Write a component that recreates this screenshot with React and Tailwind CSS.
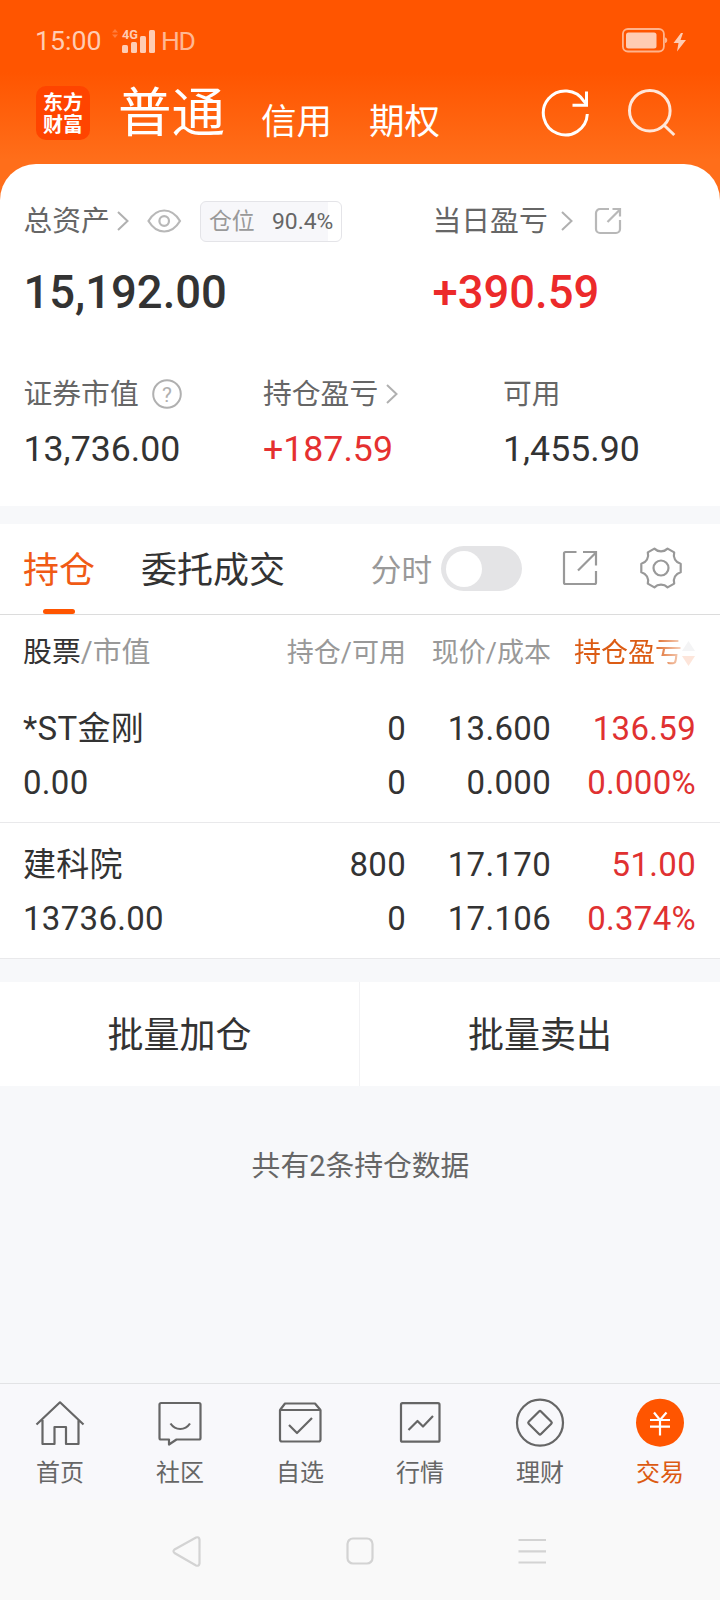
import React, { useState } from "react";

const positions = [
  {
    name: "*ST金刚",
    value: "0.00",
    amount: "0",
    available: "0",
    price: "13.600",
    cost: "0.000",
    profit: "136.59",
    rate: "0.000%",
  },
  {
    name: "建科院",
    value: "13736.00",
    amount: "800",
    available: "0",
    price: "17.170",
    cost: "17.106",
    profit: "51.00",
    rate: "0.374%",
  },
];

function Chevron({ className }) {
  return (
    <svg className={className} width="12" height="20" viewBox="0 0 12 20" fill="none" stroke="#b0b0b0" strokeWidth="2">
      <path d="M1 1l9.500 9L1 19" />
    </svg>
  );
}

function StatusBar() {
  return (
    <div className="flex h-[82px] items-center pl-[35px] pr-[33px] text-[#ffccb3]">
      <span className="w-[76px] text-[26.7px] leading-none">15:00</span>
      <svg width="46" height="26" viewBox="0 0 46 26" fill="currentColor">
        <path d="M1 4.500l3-3.500 3 3.500zM1 6.500l3 3.500 3-3.500z" opacity=".35" />
        <text x="11" y="11" fontSize="13" fontWeight="700" textLength="16" lengthAdjust="spacingAndGlyphs">4G</text>
        <rect x="11" y="17" width="6" height="8" rx="1.500" />
        <rect x="20" y="14" width="6" height="11" rx="1.500" />
        <rect x="29" y="8" width="6" height="17" rx="1.500" />
        <rect x="38" y="2" width="6" height="23" rx="1.500" />
      </svg>
      <span className="ml-[4px] text-[26.5px] leading-none tracking-[-1.5px] text-[#ffb793]">HD</span>
      <svg className="ml-auto" width="66" height="26" viewBox="0 0 66 26">
        <rect x="1.900" y="1" width="41" height="22.500" rx="5" fill="none" stroke="#ffb38c" strokeWidth="1.800" />
        <rect x="5" y="4.500" width="30.500" height="16" rx="2.500" fill="currentColor" />
        <path d="M44 9.500c3 .5 3 5 0 5.500z" fill="#ffb38c" />
        <path d="M60 5l-7.500 10h5l-1.500 8.500 9-11.500h-5.500l2.500-7z" fill="currentColor" />
      </svg>
    </div>
  );
}

function TopNav() {
  return (
    <div className="flex h-[62px] items-center pl-9 pr-11 text-white">
      <div className="flex h-[54px] w-[54px] flex-col items-center justify-center rounded-[10px] bg-[#ff4400] pt-px text-[20px] font-bold leading-[22px]">
        <span>东方</span>
        <span>财富</span>
      </div>
      <span className="ml-7 mt-px w-[106px] whitespace-nowrap text-[53.5px] leading-none">普通</span>
      <span className="ml-[37px] mt-[19px] w-[72px] text-[35.5px] leading-none">信用</span>
      <span className="ml-9 mt-[19px] text-[35.5px] leading-none">期权</span>
      <svg className="ml-auto" width="50" height="50" viewBox="0 0 50 50" fill="none" stroke="#fff" strokeWidth="3">
        <path d="M47.300 26a22 22 0 1 1-3.200-12.500L47 17" />
        <path d="M46.500 3.500v13.800h-14" />
      </svg>
      <svg className="ml-[36px]" width="50" height="50" viewBox="0 0 50 50" fill="none" stroke="#ffe6d9" strokeWidth="3">
        <circle cx="23.800" cy="22.700" r="20.300" />
        <path d="M37.800 37l10.500 10" />
      </svg>
    </div>
  );
}

function Assets() {
  return (
    <section className="h-[342px] rounded-t-[36px] bg-white pl-[23.5px] pr-6 pt-[34px] text-[#333]">
      <div className="flex h-[46px]">
        <div className="flex w-[409px] items-center text-[28.8px] text-[#666]">
          <span className="pt-[2px]">总资产</span>
          <Chevron className="ml-[7px]" />
          <svg className="ml-[18px]" width="35" height="26" viewBox="0 0 35 26" fill="none" stroke="#b8b8b8" strokeWidth="2.200">
            <path d="M1.500 13C6 5.500 11.500 2.500 17.200 2.500S28.500 5.500 33 13C28.500 20.500 23 23.500 17.200 23.500S6 20.500 1.500 13z" />
            <circle cx="17.200" cy="13" r="4.800" />
          </svg>
          <div className="ml-[18px] flex h-[41px] w-[142px] items-center rounded-md border border-[#e4e4e8] bg-[linear-gradient(to_right,#f7f7fa_127px,#fff_127px)] pl-[8px] pt-[2px] text-[22.9px]">
            <span className="w-[63px] text-[#999]">仓位</span>
            <span>90.4%</span>
          </div>
        </div>
        <div className="flex items-center text-[28.8px] text-[#666]">
          <span className="pt-[2px]">当日盈亏</span>
          <Chevron className="ml-[13px]" />
          <svg className="ml-[21px]" width="28" height="28" viewBox="0 0 28 28" fill="none" stroke="#b8b8b8" strokeWidth="2.200">
            <path d="M15 2H6a4 4 0 0 0-4 4v16a4 4 0 0 0 4 4h16a4 4 0 0 0 4-4v-9" />
            <path d="M13.500 15L26 2.500M18.500 2H26v7.500" />
          </svg>
        </div>
      </div>
      <div className="mt-[19px] flex h-[60px] items-center text-[45.4px] font-medium">
        <span className="w-[409px]">15,192.00</span>
        <span className="text-[#ec2a2a]">+390.59</span>
      </div>
      <div className="mt-[48px] grid h-[44px] grid-cols-[239.5px_240px_1fr] text-[28.800px] text-[#666]">
        <div className="flex items-center">
          <span className="pt-[2px]">证券市值</span>
          <svg className="ml-[13px]" width="30" height="30" viewBox="0 0 30 30">
            <circle cx="15" cy="15" r="13.800" fill="none" stroke="#b0b0b0" strokeWidth="2" />
            <text x="15" y="22.500" textAnchor="middle" fontSize="21" fill="#b0b0b0">?</text>
          </svg>
        </div>
        <div className="flex items-center">
          <span className="pt-[2px]">持仓盈亏</span>
          <Chevron className="ml-[8px]" />
        </div>
        <div className="flex items-center pt-[2px]">可用</div>
      </div>
      <div className="mt-[8px] grid h-[50px] grid-cols-[239.5px_240px_1fr] items-center text-[35.7px]">
        <span>13,736.00</span>
        <span className="text-[#e53030]">+187.59</span>
        <span>1,455.90</span>
      </div>
    </section>
  );
}

function Tabs({ timeShare, onToggle }) {
  return (
    <div className="mt-[18px] flex h-[91px] items-center border-b border-[#dcdcdc] bg-white pl-6 pr-[38px] text-[36px] text-[#333]">
      <div className="flex h-full w-[70px] flex-col items-center justify-between text-[#f05a14]">
        <span className="h-[85px] w-[72px] leading-[94px]">持仓</span>
        <span className="h-[5px] w-8 rounded-full bg-[#ff5500]" />
      </div>
      <span className="ml-[47px] pt-[3px]">委托成交</span>
      <span className="ml-auto pt-[3px] text-[30.6px] text-[#999]">分时</span>
      <button
        onClick={onToggle}
        className={`ml-[9px] mb-px flex h-[45px] w-[81px] items-center rounded-full bg-[#e4e4e6] px-[5px] ${timeShare ? "justify-end" : ""}`}
      >
        <span className="h-9 w-9 rounded-full bg-white" />
      </button>
      <svg className="ml-[40px] mb-[2px]" width="36" height="36" viewBox="0 0 36 36" fill="none" stroke="#999" strokeWidth="2.200">
        <path d="M14.500 2H3.500A1.500 1.500 0 0 0 2 3.500v29A1.500 1.500 0 0 0 3.500 34h29a1.500 1.500 0 0 0 1.500-1.500V21" />
        <path d="M16 20.500L34 2.500M21 2h13v13.500" />
      </svg>
      <svg className="ml-[42px] mb-[2px]" width="42" height="42" viewBox="0 0 42 42" fill="none" stroke="#999" strokeWidth="2.200" strokeLinejoin="round">
        <path d="M14.400 1.600C18 5.200 24 5.200 27.600 1.600L34.200 5.400C32.800 10.500 35.500 15.400 40.700 16.800V25.200C35.500 26.600 32.800 31.500 34.200 36.600L27.600 40.400C24 36.800 18 36.800 14.400 40.400L7.800 36.600C9.200 31.500 6.500 26.600 1.300 25.200V16.800C6.500 15.400 9.200 10.500 7.800 5.400Z" />
        <circle cx="21" cy="21" r="7.500" />
      </svg>
    </div>
  );
}

function PositionTable() {
  return (
    <div className="bg-white text-[#333]">
      <div className="grid h-[72px] grid-cols-[238px_145px_145px_145px] items-center pl-[23px] pt-[4px] text-right text-[27px] text-[#999]">
        <span className="text-left text-[28.9px]">
          <span className="text-[#333]">股票</span>/市值
        </span>
        <span>持仓/可用</span>
        <span>现价/成本</span>
        <div className="flex items-center pl-[23px] text-[#dc5c14]">
          <span className="[mask-image:linear-gradient(to_right,#000_78px,rgba(0,0,0,0.25)_108px)]">持仓盈亏</span>
          <svg className="mt-px" width="13" height="26" viewBox="0 0 13 26">
            <path d="M0 10L6.500 0 13 10z" fill="#f4f4f5" />
            <path d="M0 15h13L6.500 25z" fill="#fde5da" />
          </svg>
        </div>
      </div>
      {positions.map((item) => (
        <div
          key={item.name}
          className="grid h-[136px] grid-cols-[238px_145px_145px_145px] border-b border-[#e9e9eb] pl-[23px] pt-[15px] text-right text-[33px] leading-[54px] tracking-[0.3px]"
        >
          <div className="text-left">
            <div>{item.name}</div>
            <div>{item.value}</div>
          </div>
          <div>
            <div>{item.amount}</div>
            <div>{item.available}</div>
          </div>
          <div>
            <div>{item.price}</div>
            <div>{item.cost}</div>
          </div>
          <div className="text-[#e03131]">
            <div>{item.profit}</div>
            <div>{item.rate}</div>
          </div>
        </div>
      ))}
    </div>
  );
}

const tabs = [
  {
    label: "首页",
    icon: <path d="M1 24.500L24.500 2.300 48 24.500M7 20v24h12v-17h11.500v17h12.500V20" />,
  },
  {
    label: "社区",
    icon: (
      <>
        <path d="M5.500 3h38a1.500 1.500 0 0 1 1.500 1.500v33.500a1.500 1.500 0 0 1-1.500 1.500H21l-7.500 5V39.500h-8a1.500 1.500 0 0 1-1.500-1.500V4.500A1.500 1.500 0 0 1 5.500 3z" />
        <path d="M15 23.500c5 7.300 14.500 7.300 19.500 0" />
      </>
    ),
  },
  {
    label: "自选",
    icon: (
      <>
        <path d="M4.500 10v29.500a2 2 0 0 0 2 2h36.500a2 2 0 0 0 2-2V10zM4.500 10l5-6.500h30L45 10" />
        <path d="M13.500 25l8 8 15-15" />
      </>
    ),
  },
  {
    label: "行情",
    icon: (
      <>
        <rect x="5.500" y="3.200" width="38.500" height="38.500" rx="1.500" />
        <path d="M13 30l9-9 5.500 5.500L37.500 16" />
      </>
    ),
  },
  {
    label: "理财",
    icon: (
      <>
        <circle cx="24.500" cy="22.700" r="23" />
        <path d="M23.500 11.500q1-1 2 0l10.300 10.200q1 1 0 2L25.500 34q-1 1-2 0L13.200 23.700q-1-1 0-2z" />
      </>
    ),
  },
  {
    label: "交易",
    active: true,
    icon: (
      <>
        <circle cx="24.500" cy="22.700" r="24" fill="#ff5500" stroke="none" />
        <path d="M18.500 12.500l6 7.500 6.500-7.500M14.500 20h20M14.500 26.700h20M24.500 20v15.500" stroke="#fff" />
      </>
    ),
  },
];

function BottomBar() {
  return (
    <nav className="grid h-[117px] grid-cols-6 border-t border-[#e2e3e5] bg-[#f8f8fb] text-[24px] text-[#666]">
      {tabs.map((tab) => (
        <div key={tab.label} className={`flex flex-col items-center pt-[16px] ${tab.active ? "text-[#dc5a12]" : ""}`}>
          <svg
            className="overflow-visible"
            width="48"
            height="46"
            viewBox="0.5 0 48 46"
            fill="none"
            stroke="#666"
            strokeWidth="2.200"
            strokeLinejoin="round"
          >
            {tab.icon}
          </svg>
          <span className="mt-[11px] leading-[32px]">{tab.label}</span>
        </div>
      ))}
    </nav>
  );
}

function SystemNav() {
  return (
    <div className="flex h-[100px] items-start bg-[#f9f9f9] pl-[172px] pt-[36px]">
      <svg width="376" height="32" viewBox="0 0 376 32" fill="none" stroke="#d3d3d3" strokeWidth="2.200">
        <path d="M2.500 13.500L24 1.500q3-1 3.500 2v24q-.5 3-3.500 2L2.500 17q-2-1.700 0-3.500z" />
        <rect x="175.500" y="2.500" width="25" height="25" rx="5.500" />
        <path d="M346.500 4h27.500M346.500 15.300h27.500M346.500 26.500h27.500" />
      </svg>
    </div>
  );
}

export default function App() {
  const [timeShare, setTimeShare] = useState(false);

  return (
    <div className="flex h-[1600px] w-[720px] flex-col overflow-hidden bg-[#f7f8fa] font-['Roboto','Noto_Sans_CJK_SC',sans-serif]">
      <div className="bg-[linear-gradient(#ff5500_72px,#ff6e1a_160px)] bg-[length:100%_204px] bg-no-repeat">
        <StatusBar />
        <TopNav />
        <div className="h-5" />
        <Assets />
      </div>
      <Tabs timeShare={timeShare} onToggle={() => setTimeShare(!timeShare)} />
      <PositionTable />
      <div className="mt-[23px] grid h-[104px] grid-cols-2 bg-white text-[36px] text-[#333]">
        <button className="border-r border-[#f2f2f4] pt-[3px]">批量加仓</button>
        <button className="pt-[3px]">批量卖出</button>
      </div>
      <p className="mt-[59px] pl-px text-center text-[28.8px] leading-[42px] text-[#666]">共有2条持仓数据</p>
      <div className="mt-auto">
        <BottomBar />
        <SystemNav />
      </div>
    </div>
  );
}
